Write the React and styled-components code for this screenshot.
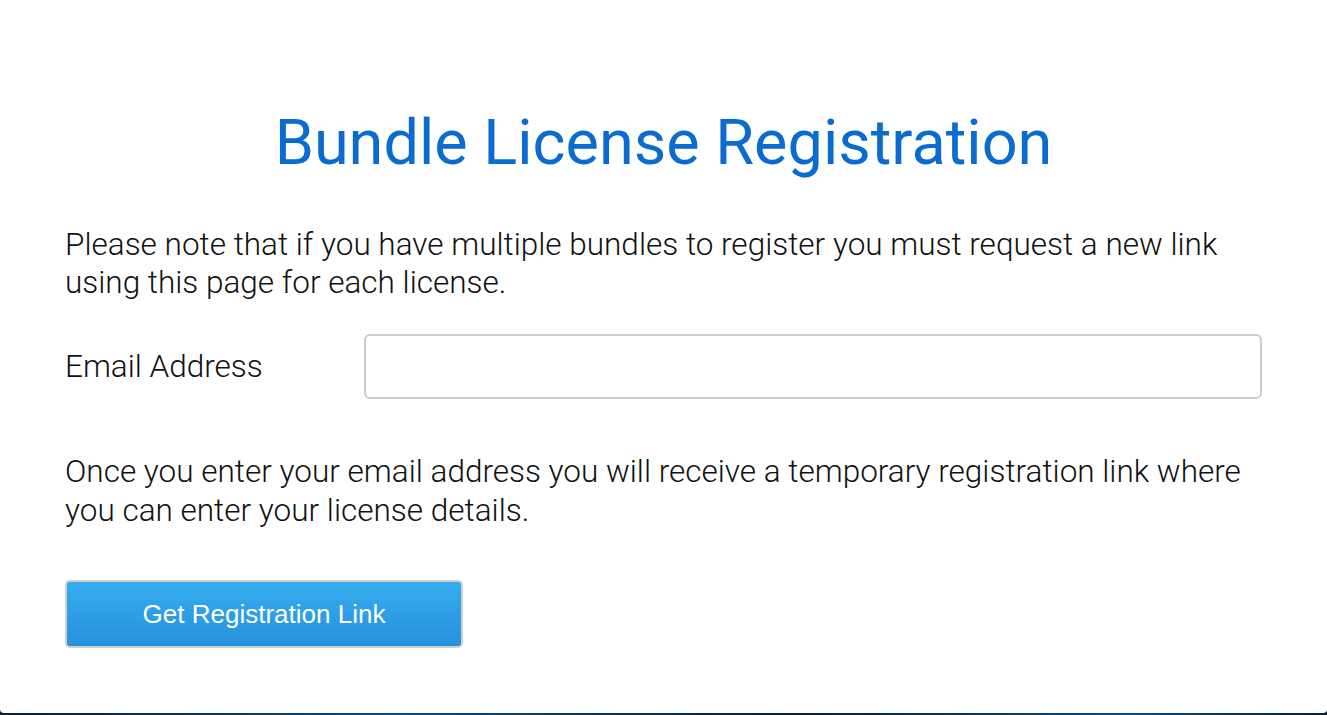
import React from 'react'
import styled, { createGlobalStyle } from 'styled-components'

const GlobalStyle = createGlobalStyle`
  html, body {
    margin: 0;
    padding: 0;
    background: #0a1622;
  }
  * { box-sizing: border-box; }
`

const Page = styled.div`
  width: 1327px;
  height: 715px;
  background: linear-gradient(90deg, #0b2030, #0d4a7a 30%, #0b2030 60%, #0d4a7a 85%, #0b2030);
  overflow: hidden;
`

const Card = styled.div`
  height: 713px;
  background: #fff;
  border-radius: 0 0 4px 4px;
  padding: 106px 65px 0 65px;
  font-family: Roboto, "Liberation Sans", sans-serif;
  font-weight: 300;
  color: #111;
`

const Title = styled.h1`
  margin: 0 0 46px 0;
  font-size: 63px;
  line-height: 74px;
  font-weight: 400;
  color: #0b6bcf;
  text-align: center;
`

const Text = styled.p`
  margin: 0;
  font-size: 31.5px;
  line-height: ${p => p.lh || 38}px;
  font-weight: 300;
  margin-bottom: ${p => p.gap || 0}px;
`

const Row = styled.div`
  display: flex;
  align-items: center;
  margin-bottom: 53px;
`

const Label = styled.label`
  width: 300px;
  font-size: 31.5px;
  font-weight: 300;
`

const Input = styled.input`
  width: 900px;
  height: 65px;
  border: 2px solid #cccccc;
  border-radius: 6px;
  background: #fff;
  outline: none;
  font-size: 24px;
  padding: 0 14px;
`

const Button = styled.button`
  width: 398px;
  height: 68px;
  border: 2px solid #cfcfcf;
  border-radius: 5px;
  background: linear-gradient(#36aeef, #2690dc);
  color: #fff;
  font-family: "Liberation Sans", Arial, sans-serif;
  font-size: 26px;
  cursor: pointer;
`

const App = () => {
  return (
    <Page>
      <GlobalStyle />
      <Card>
        <Title>Bundle License Registration</Title>
        <Text gap={32}>
          Please note that if you have multiple bundles to register you must request a new link using this page for each license.
        </Text>
        <Row>
          <Label>Email Address</Label>
          <Input type="email" />
        </Row>
        <Text gap={50} lh={39}>
          Once you enter your email address you will receive a temporary registration link where you can enter your license details.
        </Text>
        <Button>Get Registration Link</Button>
      </Card>
    </Page>
  )
}

export default App
